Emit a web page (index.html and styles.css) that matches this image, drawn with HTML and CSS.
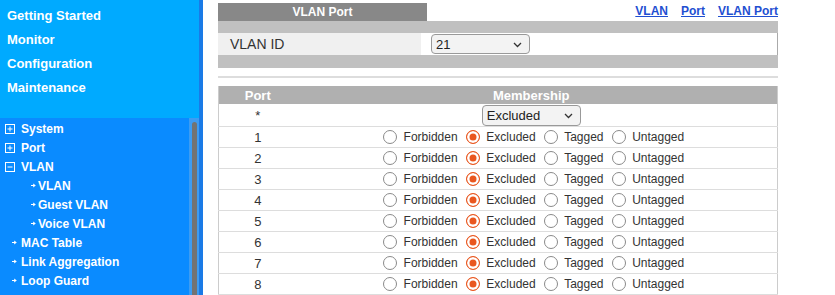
FILE: index.html
```html
<!DOCTYPE html>
<html lang="en">
    <head>
        <meta charset="UTF-8">
        <meta name="viewport" content="width=device-width, initial-scale=1.0">
        <title>VLAN Port</title>
        <link rel="stylesheet" href="styles.css">
    </head>

    <body>
        <div class="page">
            <nav class="sidebar">
                <ul class="main-menu">
                    <li>Getting Started</li>
                    <li>Monitor</li>
                    <li>Configuration</li>
                    <li>Maintenance</li>
                </ul>

                <div class="tree-frame">
                    <ul class="tree">
                        <li class="folder">
                            <svg class="box" width="10" height="10" viewBox="0 0 10 10"><rect x="0.5" y="0.5" width="9" height="9" fill="none" stroke="#fff"/><path d="M2.5 5H7.5M5 2.5V7.5" stroke="#fff"/></svg>System
                        </li>
                        <li class="folder">
                            <svg class="box" width="10" height="10" viewBox="0 0 10 10"><rect x="0.5" y="0.5" width="9" height="9" fill="none" stroke="#fff"/><path d="M2.5 5H7.5M5 2.5V7.5" stroke="#fff"/></svg>Port
                        </li>
                        <li class="folder">
                            <svg class="box" width="10" height="10" viewBox="0 0 10 10"><rect x="0.5" y="0.5" width="9" height="9" fill="none" stroke="#fff"/><path d="M2.5 5H7.5" stroke="#fff"/></svg>VLAN
                        </li>
                        <li class="sub"><svg class="arrow" width="5" height="5" viewBox="0 0 5 5"><path d="M0 2.5H3" stroke="#fff"/><path d="M2.2 0.6L4.8 2.5L2.2 4.4Z" fill="#fff"/></svg>VLAN</li>
                        <li class="sub"><svg class="arrow" width="5" height="5" viewBox="0 0 5 5"><path d="M0 2.5H3" stroke="#fff"/><path d="M2.2 0.6L4.8 2.5L2.2 4.4Z" fill="#fff"/></svg>Guest VLAN</li>
                        <li class="sub"><svg class="arrow" width="5" height="5" viewBox="0 0 5 5"><path d="M0 2.5H3" stroke="#fff"/><path d="M2.2 0.6L4.8 2.5L2.2 4.4Z" fill="#fff"/></svg>Voice VLAN</li>
                        <li class="leaf"><svg class="arrow" width="5" height="5" viewBox="0 0 5 5"><path d="M0 2.5H3" stroke="#fff"/><path d="M2.2 0.6L4.8 2.5L2.2 4.4Z" fill="#fff"/></svg>MAC Table</li>
                        <li class="leaf"><svg class="arrow" width="5" height="5" viewBox="0 0 5 5"><path d="M0 2.5H3" stroke="#fff"/><path d="M2.2 0.6L4.8 2.5L2.2 4.4Z" fill="#fff"/></svg>Link Aggregation</li>
                        <li class="leaf"><svg class="arrow" width="5" height="5" viewBox="0 0 5 5"><path d="M0 2.5H3" stroke="#fff"/><path d="M2.2 0.6L4.8 2.5L2.2 4.4Z" fill="#fff"/></svg>Loop Guard</li>
                    </ul>
                    <!-- frame scrollbar -->
                    <div class="scroll-track"><div class="scroll-thumb"></div></div>
                </div>
            </nav>

            <main class="content">
                <div class="title-row">
                    <div class="tab">VLAN Port</div>
                    <div class="links">
                        <a href="#">VLAN</a>
                        <a href="#">Port</a>
                        <a href="#">VLAN Port</a>
                    </div>
                </div>

                <table class="id-table">
                    <tr class="bar"><td colspan="2"></td></tr>
                    <tr>
                        <td class="label">VLAN ID</td>
                        <td class="value">
                            <span class="select-box">
                                <select class="field">
                                    <option>1</option>
                                    <option selected>21</option>
                                </select>
                                <svg class="chevron" width="9" height="6" viewBox="0 0 9 6"><path d="M1 1L4.5 4.5L8 1" fill="none" stroke="#333" stroke-width="1.3"/></svg>
                            </span>
                        </td>
                    </tr>
                    <tr class="bar bar-low"><td colspan="2"></td></tr>
                </table>

                <div class="divider"></div>

                <table class="port-table">
                    <colgroup><col class="port-col"><col></colgroup>
                    <tr><th>Port</th><th class="member-head">Membership</th></tr>
                    <tr class="all-row">
                        <td>*</td>
                        <td class="member">
                            <span class="select-box">
                                <select class="field">
                                    <option>Forbidden</option>
                                    <option selected>Excluded</option>
                                    <option>Tagged</option>
                                    <option>Untagged</option>
                                </select>
                                <svg class="chevron" width="9" height="6" viewBox="0 0 9 6"><path d="M1 1L4.5 4.5L8 1" fill="none" stroke="#333" stroke-width="1.3"/></svg>
                            </span>
                        </td>
                    </tr>
                    <tr><td>1</td><td class="member"><input type="radio" name="p1"> Forbidden <input type="radio" name="p1" checked> Excluded <input type="radio" name="p1"> Tagged <input type="radio" name="p1"> Untagged</td></tr>
                    <tr><td>2</td><td class="member"><input type="radio" name="p2"> Forbidden <input type="radio" name="p2" checked> Excluded <input type="radio" name="p2"> Tagged <input type="radio" name="p2"> Untagged</td></tr>
                    <tr><td>3</td><td class="member"><input type="radio" name="p3"> Forbidden <input type="radio" name="p3" checked> Excluded <input type="radio" name="p3"> Tagged <input type="radio" name="p3"> Untagged</td></tr>
                    <tr><td>4</td><td class="member"><input type="radio" name="p4"> Forbidden <input type="radio" name="p4" checked> Excluded <input type="radio" name="p4"> Tagged <input type="radio" name="p4"> Untagged</td></tr>
                    <tr><td>5</td><td class="member"><input type="radio" name="p5"> Forbidden <input type="radio" name="p5" checked> Excluded <input type="radio" name="p5"> Tagged <input type="radio" name="p5"> Untagged</td></tr>
                    <tr><td>6</td><td class="member"><input type="radio" name="p6"> Forbidden <input type="radio" name="p6" checked> Excluded <input type="radio" name="p6"> Tagged <input type="radio" name="p6"> Untagged</td></tr>
                    <tr><td>7</td><td class="member"><input type="radio" name="p7"> Forbidden <input type="radio" name="p7" checked> Excluded <input type="radio" name="p7"> Tagged <input type="radio" name="p7"> Untagged</td></tr>
                    <tr><td>8</td><td class="member"><input type="radio" name="p8"> Forbidden <input type="radio" name="p8" checked> Excluded <input type="radio" name="p8"> Tagged <input type="radio" name="p8"> Untagged</td></tr>
                </table>
            </main>
        </div>
    </body>
</html>
```

FILE: styles.css
```css
body {
    margin: 0;
    font-family: "Liberation Sans", Arial, sans-serif;
    overflow: hidden;
    background-color: #ffffff;
}

.page {
    display: flex;
    height: 100vh;
}

/* left frame */
.sidebar {
    width: 199px;
    flex-shrink: 0;
    border-right: 4px solid #1a7ae6;
    display: flex;
    flex-direction: column;
}

.main-menu {
    list-style: none;
    margin: 0;
    padding: 4px 0 0 7px;
    height: 114px;
    background-color: #00aaff;
}

.main-menu li {
    color: #ffffff;
    font-size: 13px;
    font-weight: bold;
    line-height: 24px;
}

.tree-frame {
    flex: 1;
    display: flex;
    background-color: #0a8bff;
    overflow: hidden;
}

.tree {
    list-style: none;
    margin: 0;
    padding: 1px 0 0 0;
    flex: 1;
}

.scroll-track {
    width: 10px;
    display: flex;
    flex-direction: column;
    background-color: #3d9cf2;
}

.scroll-thumb {
    flex: 1;
    width: 5px;
    margin: 4px 2px 0 3px;
    border-radius: 3px 3px 0 0;
    background-color: #737373;
}

.tree li {
    display: flex;
    align-items: center;
    height: 19px;
    color: #ffffff;
    font-size: 12px;
    font-weight: bold;
    white-space: nowrap;
}

.tree .folder {
    padding-left: 5px;
}

.tree .box {
    margin-right: 6px;
}

.tree .leaf {
    padding-left: 12px;
}

.tree .leaf .arrow {
    margin-right: 4px;
}

.tree .sub {
    padding-left: 31px;
}

.tree .sub .arrow {
    margin-right: 2px;
}

/* right frame */
.content {
    padding: 3px 0 0 15px;
    width: 560px;
}

.title-row {
    display: flex;
    justify-content: space-between;
    align-items: flex-end;
    height: 18px;
}

.tab {
    width: 209px;
    background-color: #888888;
    color: #ffffff;
    font-size: 12px;
    font-weight: bold;
    text-align: center;
    line-height: 18px;
}

.links {
    display: flex;
    gap: 13px;
    padding-bottom: 3px;
}

.links a {
    color: #1f4fd1;
    font-size: 12px;
    font-weight: bold;
}

.id-table {
    width: 560px;
    border-collapse: collapse;
}

.id-table td {
    padding: 0;
}

.id-table .bar td {
    height: 12px;
    background-color: #c0c0c0;
}

.id-table .bar-low td {
    height: 13px;
}

.id-table .label {
    width: 191px;
    padding-left: 12px;
    background-color: #f0f0f0;
    font-size: 14px;
    color: #333;
}

.id-table .value {
    height: 22px;
    padding-left: 10px;
    border-right: 1px solid #aaaaaa;
}

.select-box {
    position: relative;
    display: inline-block;
    vertical-align: middle;
    line-height: 0;
}

.field {
    appearance: none;
    width: 99px;
    height: 20px;
    padding: 0 4px;
    font-family: "Liberation Sans", Arial, sans-serif;
    font-size: 13px;
    text-align: left;
    color: #222;
    background-color: #f3f3f3;
    border: 1px solid #999999;
    border-radius: 4px;
}

.chevron {
    position: absolute;
    right: 8px;
    top: 8px;
    pointer-events: none;
}

.divider {
    height: 2px;
    margin: 8px 0;
    background-color: #dddddd;
}

.port-table {
    width: 560px;
    border-collapse: collapse;
    table-layout: fixed;
    border-left: 1px solid #cccccc;
    border-right: 1px solid #cccccc;
}

.port-col {
    width: 78px;
}

.port-table th {
    height: 18px;
    padding: 0;
    background-color: #b0b0b0;
    color: #ffffff;
    font-size: 13px;
    font-weight: bold;
}

.port-table .member-head {
    padding-right: 11px;
}

.port-table td {
    height: 20px;
    padding: 0;
    border-bottom: 1px solid #dddddd;
    text-align: center;
    font-size: 13px;
    color: #333;
}

.port-table .all-row td {
    height: 22px;
}

.port-table .all-row .field {
    height: 21px;
}

.port-table .all-row .chevron {
    top: 8px;
}

.port-table td.member {
    white-space: nowrap;
    font-size: 12px;
    padding-right: 11px;
}

.member input[type="radio"] {
    appearance: none;
    width: 14px;
    height: 14px;
    margin: 0 3px 0 5px;
    border: 1.5px solid #8a8a8a;
    border-radius: 50%;
    background-color: #ffffff;
    vertical-align: -3px;
}

.member input[type="radio"]:checked {
    border-color: #e9571f;
    background-color: #e9571f;
    box-shadow: inset 0 0 0 2.5px #ffffff;
}
```
